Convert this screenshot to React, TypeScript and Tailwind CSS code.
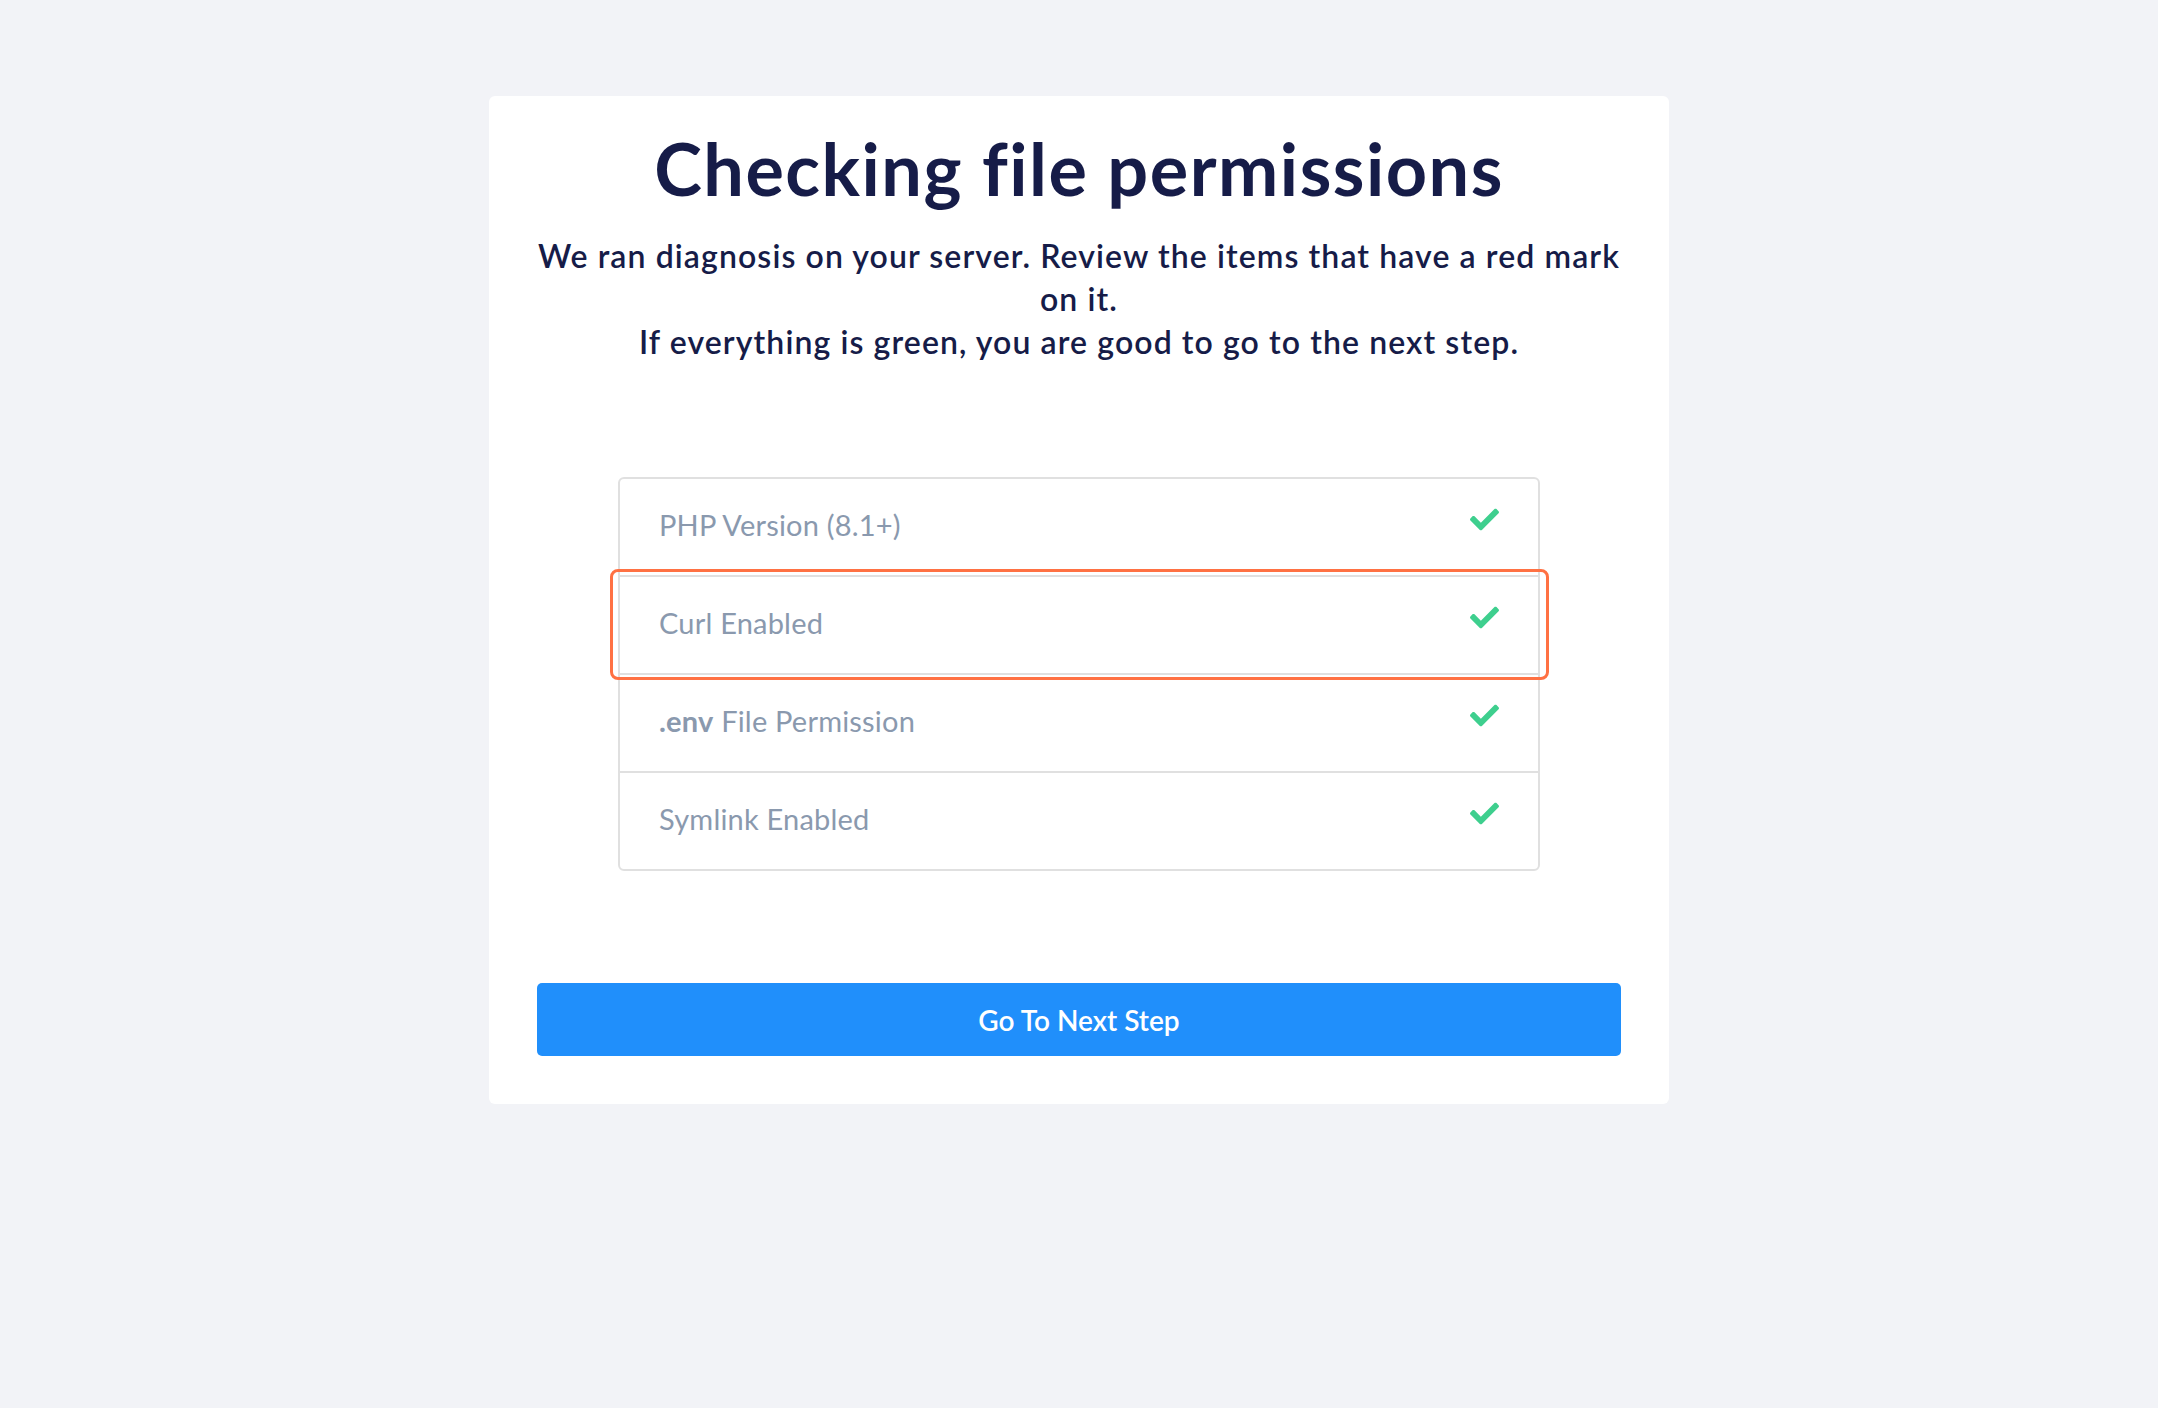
import React from 'react';
import { FaCheck } from 'react-icons/fa';

interface Requirement {
  label: React.ReactNode;
  passed: boolean;
  highlighted?: boolean;
}

const requirements: Requirement[] = [
  { label: 'PHP Version (8.1+)', passed: true },
  { label: 'Curl Enabled', passed: true, highlighted: true },
  {
    label: (
      <>
        <span className="font-bold">.env</span> File Permission
      </>
    ),
    passed: true,
  },
  { label: 'Symlink Enabled', passed: true },
];

export default function App() {
  return (
    <div className="min-h-[1408px] w-full bg-[#f2f3f7] pt-[96px] font-['Lato','Noto_Sans',sans-serif]">
      <div className="mx-auto w-[1180px] rounded-[6px] bg-white px-12 pt-[30px] pb-12">
        <h1 className="text-center text-[72px] font-bold leading-[84px] tracking-[1.5px] text-[#161c48]">
          Checking file permissions
        </h1>
        <p className="mt-[24px] text-center text-[32px] font-semibold leading-[43px] tracking-[1.1px] text-[#161c48]">
          We ran diagnosis on your server. Review the items that have a red mark
          <br />
          on it.
          <br />
          If everything is green, you are good to go to the next step.
        </p>

        <div className="mx-auto mt-[114px] w-[922px] rounded-[6px] border-2 border-[#e0e0e0]">
          {requirements.map((item, index) => {
            const last = index === requirements.length - 1;
            return (
              <div
                key={index}
                className={`relative flex items-center justify-between px-[39px] ${
                  last ? 'h-[96px]' : 'h-[98px] border-b-2 border-[#e0e0e0]'
                }`}
              >
                <span className="-translate-y-[2px] text-[29px] leading-[42px] tracking-[0.2px] text-[#8a99ae]">
                  {item.label}
                </span>
                {item.passed && <FaCheck className="-mt-4 text-[#3ecf8e]" size={29} />}
                {item.highlighted && (
                  <div className="pointer-events-none absolute -top-[8px] -bottom-[7px] -left-[10px] -right-[11px] rounded-[8px] border-[3.5px] border-[#ff7143]" />
                )}
              </div>
            );
          })}
        </div>

        <button
          type="button"
          className="mt-[112px] flex h-[73px] w-full items-center justify-center rounded-[5px] bg-[#208ffb] text-[28px] font-semibold text-white"
        >
          Go To Next Step
        </button>
      </div>
    </div>
  );
}
